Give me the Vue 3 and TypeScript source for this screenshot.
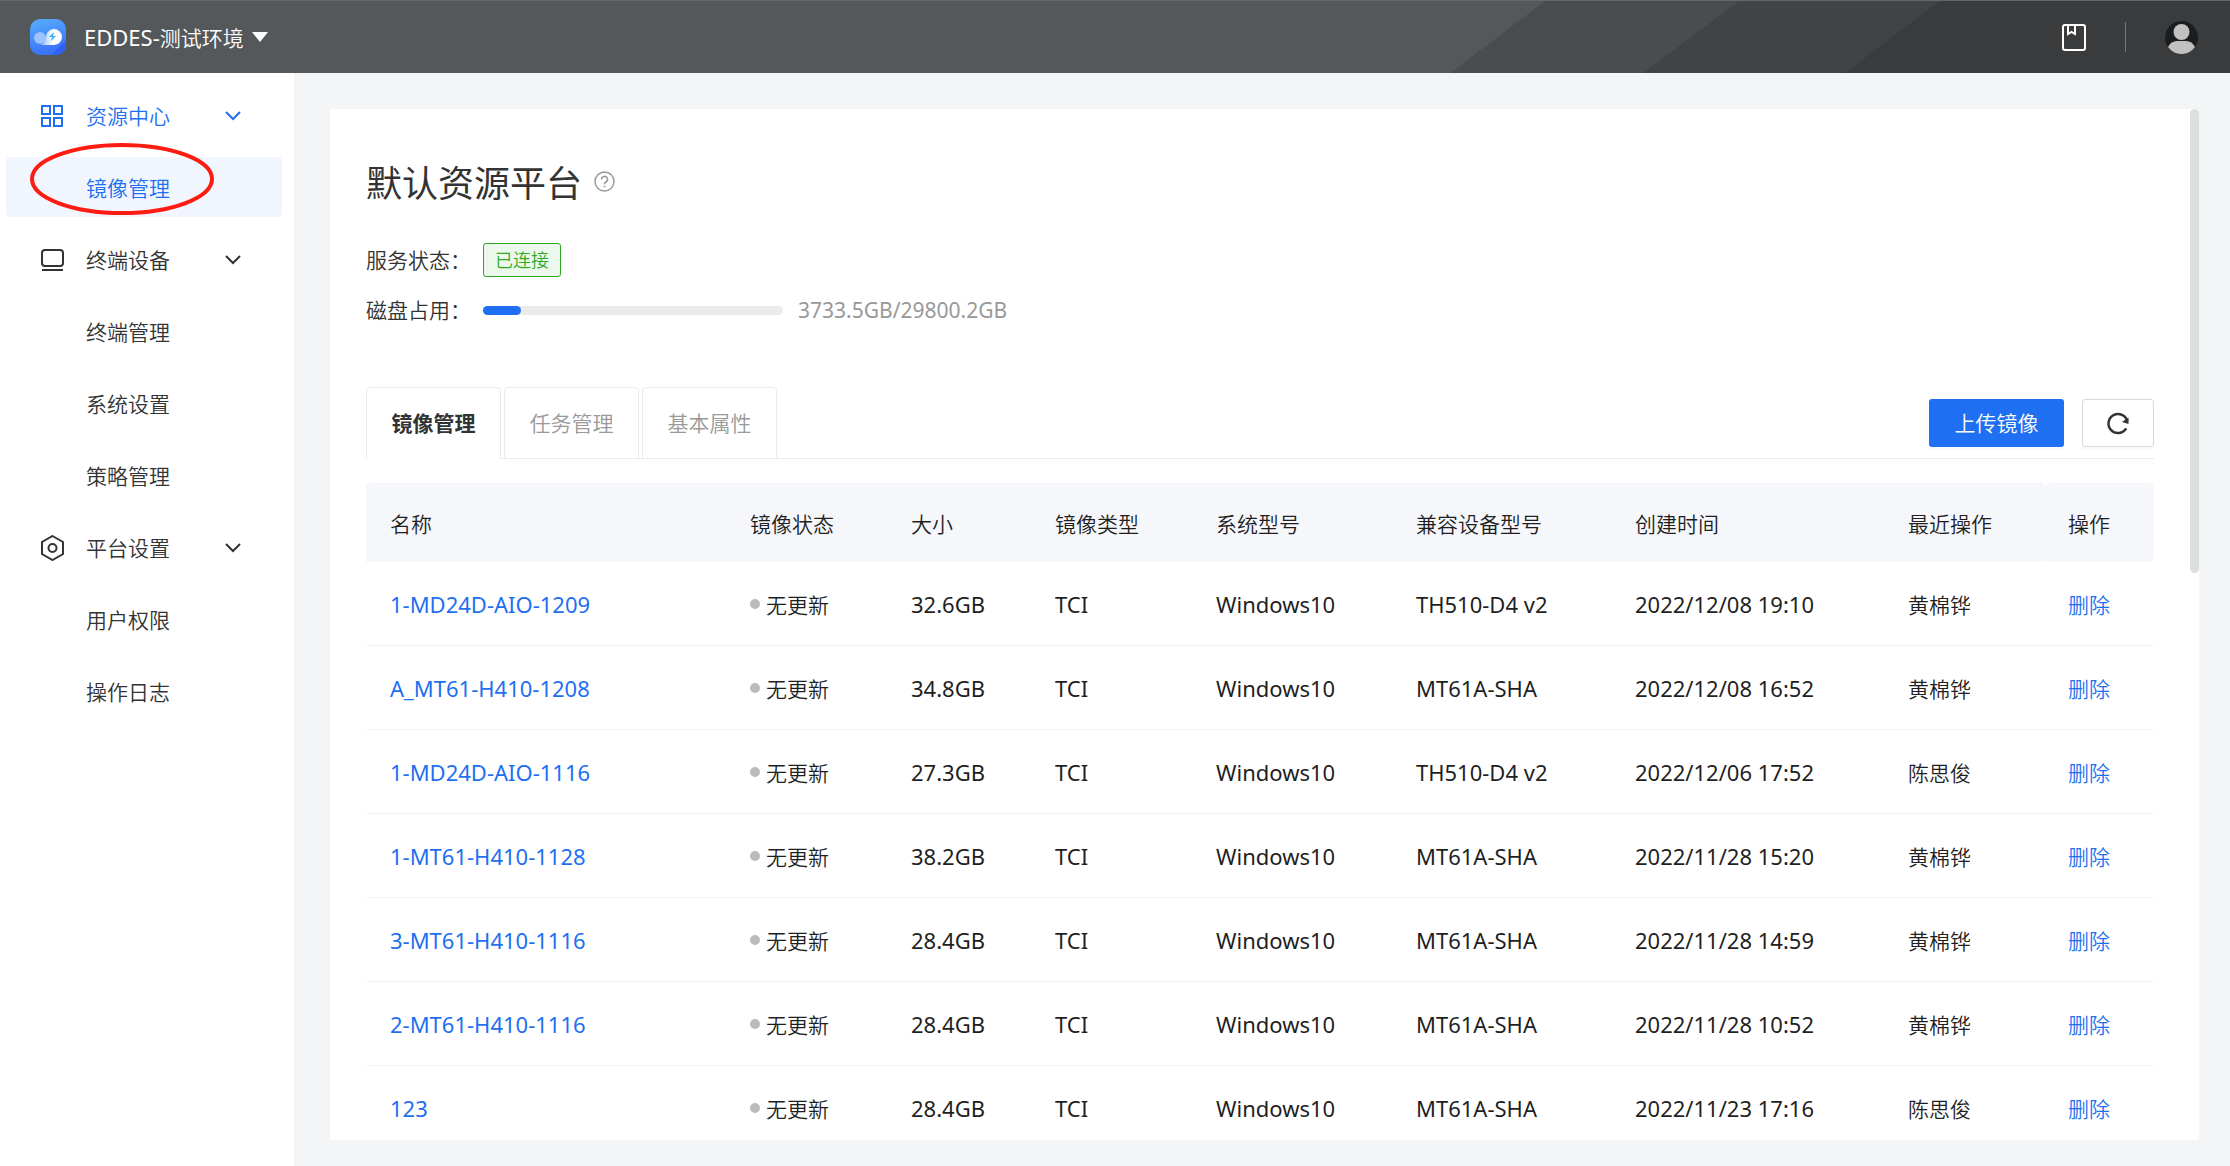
<script setup lang="ts">
import { ref } from 'vue'

interface MenuGroup {
  icon: 'grid' | 'device' | 'platform'
  label: string
  items: string[]
}

interface ImageRow {
  name: string
  size: string
  model: string
  created: string
  operator: string
}

const menu: MenuGroup[] = [
  { icon: 'grid', label: '资源中心', items: ['镜像管理'] },
  { icon: 'device', label: '终端设备', items: ['终端管理', '系统设置', '策略管理'] },
  { icon: 'platform', label: '平台设置', items: ['用户权限', '操作日志'] },
]
const currentItem = ref('镜像管理')

const tabs = ['镜像管理', '任务管理', '基本属性']
const currentTab = ref('镜像管理')

const columns = [
  { key: 'name', label: '名称' },
  { key: 'status', label: '镜像状态' },
  { key: 'size', label: '大小' },
  { key: 'type', label: '镜像类型' },
  { key: 'system', label: '系统型号' },
  { key: 'model', label: '兼容设备型号' },
  { key: 'created', label: '创建时间' },
  { key: 'operator', label: '最近操作' },
  { key: 'action', label: '操作' },
]

const rows: ImageRow[] = [
  { name: '1-MD24D-AIO-1209', size: '32.6GB', model: 'TH510-D4 v2', created: '2022/12/08 19:10', operator: '黄棉铧' },
  { name: 'A_MT61-H410-1208', size: '34.8GB', model: 'MT61A-SHA', created: '2022/12/08 16:52', operator: '黄棉铧' },
  { name: '1-MD24D-AIO-1116', size: '27.3GB', model: 'TH510-D4 v2', created: '2022/12/06 17:52', operator: '陈思俊' },
  { name: '1-MT61-H410-1128', size: '38.2GB', model: 'MT61A-SHA', created: '2022/11/28 15:20', operator: '黄棉铧' },
  { name: '3-MT61-H410-1116', size: '28.4GB', model: 'MT61A-SHA', created: '2022/11/28 14:59', operator: '黄棉铧' },
  { name: '2-MT61-H410-1116', size: '28.4GB', model: 'MT61A-SHA', created: '2022/11/28 10:52', operator: '黄棉铧' },
  { name: '123', size: '28.4GB', model: 'MT61A-SHA', created: '2022/11/23 17:16', operator: '陈思俊' },
]

const usedGb = 3733.5
const totalGb = 29800.2
</script>

<template>
  <div class="app">
    <header class="topbar">
      <svg class="stripes" viewBox="0 0 780 73" preserveAspectRatio="none" aria-hidden="true">
        <path d="M95 0H780V73H0z" fill="#4b4c4f" />
        <path d="M289 0H780V73H193z" fill="#424346" />
        <path d="M490 0H780V73H395z" fill="#3a3b3c" />
      </svg>
      <svg class="logo" viewBox="0 0 36 36" aria-hidden="true">
        <defs>
          <linearGradient id="logo-bg" x1="0" y1="0" x2="0.3" y2="1">
            <stop offset="0" stop-color="#57aefc" />
            <stop offset="1" stop-color="#3a72fa" />
          </linearGradient>
          <linearGradient id="logo-cloud" x1="0" y1="0" x2="1" y2="0">
            <stop offset="0" stop-color="#8ab6fc" />
            <stop offset="0.6" stop-color="#ffffff" />
          </linearGradient>
        </defs>
        <rect width="36" height="36" rx="10" fill="url(#logo-bg)" />
        <path d="M21 36L36 21v5a10 10 0 0 1-10 10z" fill="#2f63f6" />
        <circle cx="10" cy="19" r="6" fill="#9cc3fd" />
        <path d="M10 26c3 0 5-3 6-7a8 8 0 1 1 8 7z" fill="url(#logo-cloud)" />
        <path d="M24 13l-5 5h3l-1 4 5-5h-3z" fill="#35b0f5" />
      </svg>
      <button class="env" type="button">
        <span><span class="latin">EDDES-</span>测试环境</span>
        <svg class="caret" viewBox="0 0 16 10" aria-hidden="true"><path d="M0 0H16L8 10z" fill="#fff" /></svg>
      </button>
      <div class="tools">
        <button class="icon-btn" type="button" aria-label="文档">
          <svg width="24" height="27" viewBox="0 0 24 27" fill="none" stroke="#fff" stroke-width="2">
            <rect x="1" y="1" width="22" height="25" rx="2" />
            <path d="M6 1v9l3.500-2L13 10V1" />
          </svg>
        </button>
        <span class="divider"></span>
        <button class="icon-btn" type="button" aria-label="账户">
          <svg width="33" height="33" viewBox="0 0 33 33">
            <circle cx="16.500" cy="16.500" r="16.500" fill="#1c1d1f" />
            <circle cx="16.500" cy="11" r="8" fill="#c1c1c1" />
            <path d="M3 26c2-4 5-6 9-6h9c4 0 7 2 9 6a16.500 16.500 0 0 1-27 0z" fill="#c1c1c1" />
          </svg>
        </button>
      </div>
    </header>

    <div class="body">
      <nav class="sidebar">
        <template v-for="group in menu" :key="group.label">
          <button class="item group" :class="{ active: group.items.includes(currentItem) }" type="button">
            <svg class="group-icon" viewBox="0 0 24 26" fill="none" stroke="currentColor" stroke-width="2" aria-hidden="true">
              <g v-if="group.icon === 'grid'">
                <rect x="1" y="3" width="8" height="8" />
                <rect x="13" y="3" width="8" height="8" />
                <rect x="1" y="15" width="8" height="8" />
                <rect x="13" y="15" width="8" height="8" />
              </g>
              <g v-else-if="group.icon === 'device'">
                <rect x="1" y="3" width="21" height="16" rx="3" />
                <path d="M1 23H22" />
              </g>
              <g v-else>
                <path d="M11.500 1L22 7v12l-10.500 6L1 19V7z" />
                <circle cx="11.500" cy="13" r="4" />
              </g>
            </svg>
            <span class="label">{{ group.label }}</span>
            <svg class="chevron" viewBox="0 0 16 10" fill="none" stroke="currentColor" stroke-width="2" aria-hidden="true">
              <path d="M1 1L8 8L15 1" />
            </svg>
          </button>
          <a
            v-for="item in group.items"
            :key="item"
            class="item child"
            :class="{ current: item === currentItem }"
            href="#"
            @click.prevent="currentItem = item"
          >
            {{ item }}
            <svg v-if="item === '镜像管理'" class="marker" viewBox="0 0 184 72" fill="none" aria-hidden="true">
              <ellipse cx="92" cy="36" rx="90" ry="34" stroke="#fc1c12" stroke-width="4" />
            </svg>
          </a>
        </template>
      </nav>

      <main class="content">
        <div class="card">
          <section class="scroll">
            <div class="title">
              <h1>默认资源平台</h1>
              <svg width="21" height="21" viewBox="0 0 21 21" fill="none" stroke="#999" aria-hidden="true">
                <circle cx="10.500" cy="10.500" r="9.500" stroke-width="1.500" />
                <path d="M7.500 8.500a3 3 0 1 1 4.500 2.500c-1 .6-1.500 1-1.500 2.200" stroke-width="1.500" />
                <path d="M10.500 14.800v1.500" stroke-width="1.700" />
              </svg>
            </div>
            <div class="info status">
              <span class="info-label">服务状态：</span>
              <span class="tag">已连接</span>
            </div>
            <div class="info disk">
              <span class="info-label">磁盘占用：</span>
              <div class="bar" role="progressbar" aria-label="磁盘占用" :aria-valuenow="usedGb" :aria-valuemax="totalGb">
                <div class="fill" :style="{ width: (usedGb / totalGb) * 100 + '%' }"></div>
              </div>
              <span class="usage">{{ usedGb }}GB/{{ totalGb }}GB</span>
            </div>

            <div class="tab-row">
              <div class="tabs" role="tablist">
                <button
                  v-for="tab in tabs"
                  :key="tab"
                  class="tab"
                  :class="{ selected: tab === currentTab }"
                  type="button"
                  role="tab"
                  :aria-selected="tab === currentTab"
                  @click="currentTab = tab"
                >
                  {{ tab }}
                </button>
              </div>
              <div class="actions">
                <button class="btn primary" type="button">上传镜像</button>
                <button class="btn refresh" type="button" aria-label="刷新">
                  <svg width="24" height="24" viewBox="0 0 24 24" fill="none" stroke="#333" stroke-width="2.500">
                    <path d="M20.200 17.300A9.500 9.500 0 1 1 21.300 10.500" />
                    <path d="M22.500 6.500V13L16 11z" fill="#333" stroke="none" />
                  </svg>
                </button>
              </div>
            </div>

            <table>
              <colgroup>
                <col v-for="col in columns" :key="col.key" :class="'col-' + col.key" />
              </colgroup>
              <thead>
                <tr>
                  <th v-for="col in columns" :key="col.key" scope="col">{{ col.label }}</th>
                </tr>
              </thead>
              <tbody>
                <tr v-for="row in rows" :key="row.name">
                  <td class="latin"><a href="#" @click.prevent>{{ row.name }}</a></td>
                  <td><span class="state"><i class="dot"></i>无更新</span></td>
                  <td class="latin">{{ row.size }}</td>
                  <td class="latin">TCI</td>
                  <td class="latin">Windows10</td>
                  <td class="latin">{{ row.model }}</td>
                  <td class="latin">{{ row.created }}</td>
                  <td>{{ row.operator }}</td>
                  <td><a href="#" @click.prevent>删除</a></td>
                </tr>
              </tbody>
            </table>
          </section>
          <div class="rail" aria-hidden="true"><div class="thumb"></div></div>
        </div>
      </main>
    </div>
  </div>
</template>

<style>
body {
  margin: 0;
}
</style>

<style scoped>
.app {
  display: flex;
  flex-direction: column;
  height: 100vh;
  font: 350 21px/30px 'Noto Sans CJK SC', sans-serif;
  color: #333;
  background: #f4f5f7;
}
.app * {
  box-sizing: border-box;
}
button {
  font: inherit;
  color: inherit;
  padding: 0;
  border: 0;
  background: none;
  cursor: pointer;
}
a {
  color: #1e6ff1;
  text-decoration: none;
}
svg {
  display: block;
  flex: none;
}
.latin {
  font-family: 'Noto Sans', 'Noto Sans CJK SC', sans-serif;
  font-size: 22px;
  font-weight: 400;
}

.topbar {
  position: relative;
  display: flex;
  flex: none;
  align-items: center;
  height: 73px;
  padding: 0 32px 0 30px;
  color: #fff;
  background: #55585b;
  border-top: 1px solid #626769;
}
.stripes {
  position: absolute;
  top: 0;
  right: 0;
  width: 780px;
  height: 100%;
}
.logo {
  width: 36px;
  height: 36px;
}
.env {
  display: flex;
  align-items: center;
  gap: 8px;
  margin-left: 18px;
}
.caret {
  width: 16px;
  height: 10px;
}
.tools {
  position: relative;
  display: flex;
  align-items: center;
  gap: 39px;
  margin-left: auto;
}
.divider {
  width: 1px;
  height: 30px;
  background: #75767a;
}

.body {
  display: flex;
  flex: 1;
  min-height: 0;
}
.sidebar {
  display: flex;
  flex: none;
  flex-direction: column;
  gap: 12px;
  width: 294px;
  padding: 12px 12px 12px 6px;
  background: #fff;
}
.item {
  display: flex;
  flex: none;
  align-items: center;
  height: 60px;
  color: #333;
  border-radius: 4px;
}
.group {
  padding: 0 41px 0 35px;
}
.group-icon {
  width: 24px;
  height: 26px;
  margin-top: 1px;
}
.label {
  margin-left: 21px;
}
.chevron {
  width: 16px;
  height: 10px;
  margin-top: 1px;
  margin-left: auto;
}
.child {
  position: relative;
  padding-left: 80px;
}
.active,
.current {
  color: #1e6ff1;
}
.current {
  background: #f1f6fe;
}
.marker {
  position: absolute;
  top: -14px;
  left: 24px;
  width: 184px;
  height: 72px;
}

.content {
  flex: 1;
  min-width: 0;
  padding: 36px 31px 26px 36px;
}
.card {
  display: flex;
  height: 100%;
  background: #fff;
}
.scroll {
  flex: 1;
  min-width: 0;
  padding: 47px 36px 0;
  overflow: auto;
  scrollbar-width: none;
}
.rail {
  flex: none;
  width: 9px;
}
.thumb {
  height: 45%;
  border-radius: 5px;
  background: #dcdfde;
}
.title {
  display: flex;
  align-items: center;
  gap: 12px;
}
h1 {
  margin: 0;
  font-size: 36px;
  font-weight: 400;
  line-height: 50px;
}
.info {
  display: flex;
  align-items: center;
}
.status {
  height: 34px;
  margin-top: 37px;
}
.disk {
  height: 30px;
  margin-top: 18px;
}
.info-label {
  width: 117px;
  padding-bottom: 2px;
}
.tag {
  padding: 0 11px 2px;
  font-size: 18px;
  line-height: 30px;
  color: #2dab1f;
  background: #edf8ec;
  border: 1px solid #2dab1f;
  border-radius: 3px;
}
.bar {
  width: 300px;
  height: 9px;
  border-radius: 5px;
  background: #ebebeb;
}
.fill {
  height: 100%;
  border-radius: 5px;
  background: #1e6ff1;
}
.usage {
  margin-left: 15px;
  font-family: 'Noto Sans', sans-serif;
  font-weight: 400;
  color: #999;
}

.tab-row {
  display: flex;
  justify-content: space-between;
  height: 72px;
  margin-top: 62px;
  border-bottom: 1px solid #ebebeb;
}
.tabs {
  display: flex;
  gap: 3px;
}
.tab {
  width: 135px;
  height: 72px;
  padding-bottom: 2px;
  color: #999;
  border: 1px solid #ebebeb;
  border-radius: 4px 4px 0 0;
}
.selected {
  font-weight: 700;
  color: #333;
  background: #fff;
  border-bottom-color: #fff;
}
.actions {
  display: flex;
  align-items: center;
  gap: 18px;
}
.btn {
  display: flex;
  align-items: center;
  justify-content: center;
  width: 72px;
  height: 48px;
  border-radius: 3px;
  box-shadow: 0 3px 0 #fafafa;
}
.primary {
  width: 135px;
  padding-bottom: 2px;
  color: #fff;
  background: #1e6ff1;
}
.refresh {
  border: 1px solid #d9d9d9;
}

table {
  width: 100%;
  margin-top: 24px;
  table-layout: fixed;
  border-collapse: separate;
  border-spacing: 0;
  color: #1f1f1f;
}
.col-status,
.col-type {
  width: 161px;
}
.col-size {
  width: 144px;
}
.col-system {
  width: 200px;
}
.col-model {
  width: 219px;
}
.col-created {
  width: 273px;
}
.col-operator {
  width: 160px;
}
.col-action {
  width: 110px;
}
th,
td {
  padding: 0 0 0 24px;
  text-align: left;
  white-space: nowrap;
}
th {
  height: 79px;
  font-weight: 350;
  background: #f5f7fb;
}
th:first-child {
  border-radius: 4px 0 0 0;
}
th:last-child {
  border-radius: 6px;
}
td {
  height: 84px;
  border-bottom: 1px solid #f2f2f2;
}
.state {
  display: flex;
  align-items: center;
  gap: 6px;
}
.dot {
  width: 10px;
  height: 10px;
  border-radius: 50%;
  background: #bbb;
}
</style>
